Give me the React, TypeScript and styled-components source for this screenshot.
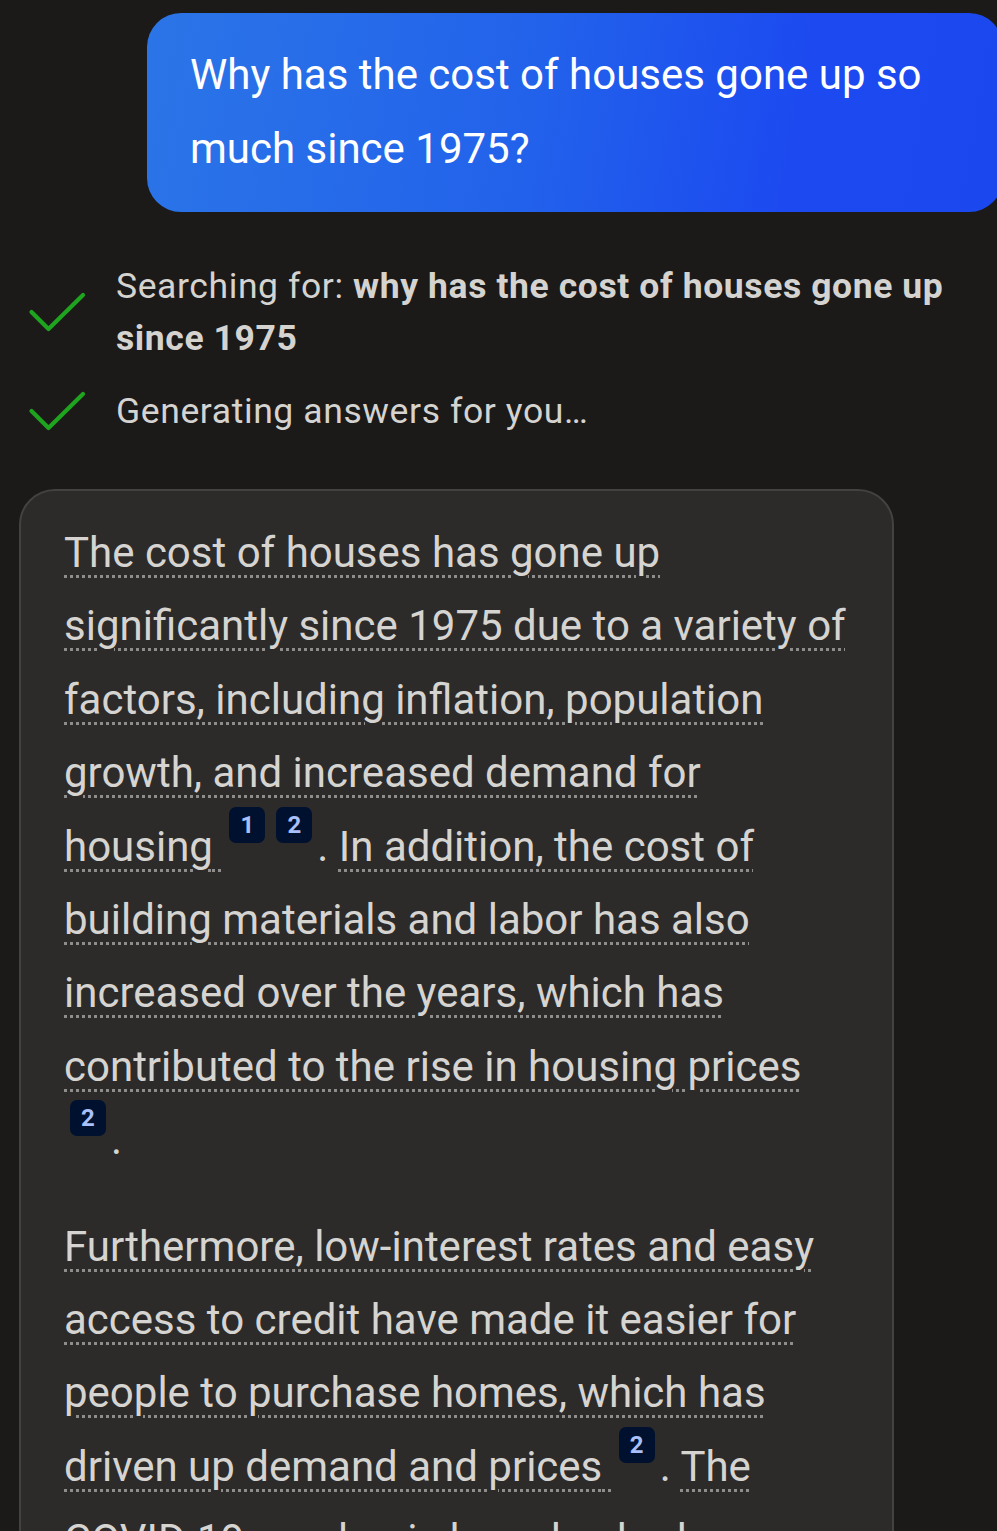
import React from "react";
import styled, { createGlobalStyle } from "styled-components";

const Global = createGlobalStyle`
  html, body { margin: 0; padding: 0; background: #1b1a19; overflow: hidden; }
  body { font-family: Roboto, "Noto Sans", "Liberation Sans", sans-serif; }
`;

const Page = styled.div`
  display: flex;
  flex-direction: column;
  width: 997px;
  padding-top: 13px;
  box-sizing: border-box;
`;

const UserBubble = styled.div`
  align-self: flex-start;
  margin-left: 147px;
  width: 856px;
  box-sizing: border-box;
  padding: 25px 60px 26px 43px;
  border-radius: 34px;
  background: linear-gradient(100deg, #2b75e7 0%, #2262eb 45%, #1c4af0 75%, #1b47ef 100%);
  color: #ffffff;
  font-size: 42px;
  line-height: 74px;
`;

const Steps = styled.div`
  display: flex;
  flex-direction: column;
  gap: 21px;
  margin-top: 48px;
  padding-left: 26px;
  padding-right: 40px;
`;

const StepRow = styled.div`
  display: flex;
  align-items: center;
  gap: 28px;
`;

const StepText = styled.div`
  color: #d5d3d0;
  font-size: 35.5px;
  letter-spacing: 0.6px;
  line-height: 52px;
  b { font-weight: 700; }
`;

const CheckIcon = () => (
  <svg width="62" height="44" viewBox="0 0 62 44" style={{ flexShrink: 0 }}>
    <path d="M5.5 22 L22.5 39 L57 5" fill="none" stroke="#1ea41e" strokeWidth="4.2" strokeLinecap="round" strokeLinejoin="round" />
  </svg>
);

const AnswerCard = styled.div`
  margin: 52px 0 0 19px;
  width: 875px;
  box-sizing: border-box;
  border: 2px solid #434241;
  border-radius: 36px;
  background: #2c2b2a;
  padding: 25px 43px 40px 43px;
  color: #d6d4d1;
  font-size: 42px;
  line-height: 73.4px;
`;

const Para = styled.p`
  margin: 0 0 33px 0;
`;

const Sentence = styled.span`
  text-decoration-line: underline;
  text-decoration-style: dotted;
  text-decoration-color: #8f8d8b;
  text-decoration-thickness: 3px;
  text-underline-offset: 8px;
  text-decoration-skip-ink: auto;
`;

const Cite = styled.span`
  display: inline-flex;
  align-items: center;
  justify-content: center;
  vertical-align: top;
  transform: translateY(-3px);
  width: 36px;
  height: 36px;
  margin: 0 5px 0 6px;
  border-radius: 7px;
  background: #00112f;
  color: #a9c0fb;
  font-size: 24px;
  font-weight: 700;
  line-height: 1;
`;

export default function App() {
  return (
    <>
      <Global />
      <Page>
        <UserBubble>Why has the cost of houses gone up so much since 1975?</UserBubble>
        <Steps>
          <StepRow>
            <CheckIcon />
            <StepText>
              Searching for: <b>why has the cost of houses gone up since 1975</b>
            </StepText>
          </StepRow>
          <StepRow>
            <CheckIcon />
            <StepText>Generating answers for you…</StepText>
          </StepRow>
        </Steps>
        <AnswerCard>
          <Para>
            <Sentence>
              The cost of houses has gone up significantly since 1975 due to a variety of factors, including inflation,
              population growth, and increased demand for housing{" "}
            </Sentence>
            <Cite>1</Cite>
            <Cite>2</Cite>.{" "}
            <Sentence>
              In addition, the cost of building materials and labor has also increased over the years, which has
              contributed to the rise in housing prices{" "}
            </Sentence>
            <Cite>2</Cite>.
          </Para>
          <Para>
            <Sentence>
              Furthermore, low-interest rates and easy access to credit have made it easier for people to purchase
              homes, which has driven up demand and prices{" "}
            </Sentence>
            <Cite>2</Cite>.{" "}
            <Sentence>
              The COVID-19 pandemic has also had a significant impact on the housing market, as many people have sought
              larger homes with more space.
            </Sentence>
          </Para>
        </AnswerCard>
      </Page>
    </>
  );
}
